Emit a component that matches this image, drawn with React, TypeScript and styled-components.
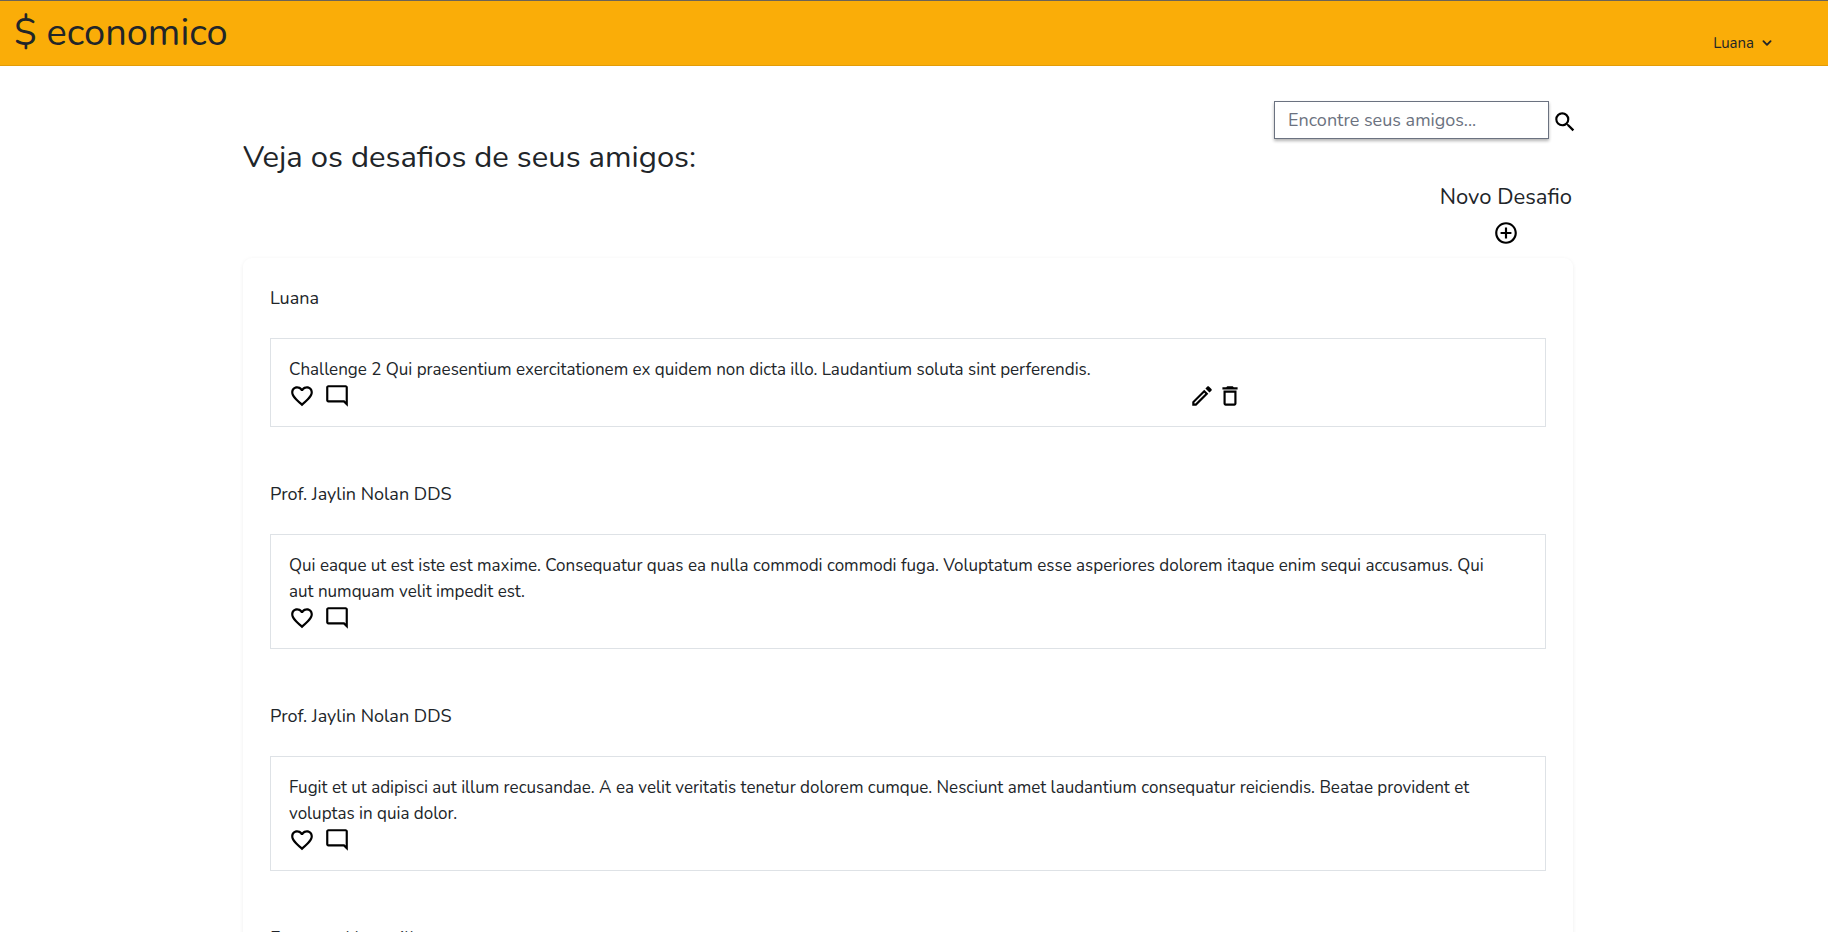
import React from "react";
import styled, { createGlobalStyle } from "styled-components";
import {
  MdSearch,
  MdAddCircleOutline,
  MdFavoriteBorder,
  MdOutlineModeComment,
  MdOutlineEdit,
  MdDeleteOutline,
} from "react-icons/md";

const GlobalStyle = createGlobalStyle`
  *, *::before, *::after { box-sizing: border-box; }
  html { overflow-x: hidden; scrollbar-width: none; }
  body {
    margin: 0;
    background: #fff;
    color: #212529;
    font-family: Nunito, Lato, sans-serif;
    font-size: 18px;
    line-height: 26px;
  }
  button, input { font: inherit; color: inherit; }
  h1, h2, h3, p { margin: 0; font-weight: 400; }
`;

const Header = styled.header`
  display: flex;
  justify-content: space-between;
  height: 66px;
  padding: 0 52px 0 14px;
  background: #faad08;
  border-top: 1px solid #6b6459;
  border-bottom: 1px solid #e39c07;
`;

const Brand = styled.a`
  padding-top: 9px;
  color: inherit;
  font-size: 38px;
  line-height: 46px;
  text-decoration: none;
`;

const UserMenu = styled.button`
  display: flex;
  align-items: center;
  align-self: flex-end;
  gap: 4px;
  margin-bottom: 9px;
  padding: 0;
  border: 0;
  background: none;
  font-size: 15px;
  line-height: 26px;
`;

const Page = styled.div`
  padding: 35px 12px 0 0;
`;

const Content = styled.main`
  width: 75%;
  max-width: 1330px;
  margin: 0 auto;
`;

const Search = styled.form`
  display: flex;
  justify-content: flex-end;
  align-items: center;
  gap: 3px;
  margin-right: -5px;
`;

const SearchInput = styled.input`
  width: 275px;
  height: 38px;
  padding: 0 13px;
  border: 1px solid #6b7280;
  border-radius: 0;
  background: #fff;
  box-shadow: 0 2px 3px rgba(0, 0, 0, 0.3);
  &::placeholder { color: #6b7280; opacity: 1; }
`;

const IconButton = styled.button`
  display: flex;
  padding: 0;
  border: 0;
  background: none;
  color: #000;
`;

const SearchButton = styled(IconButton)`
  padding-top: 3px;
`;

const Title = styled.h1`
  font-size: 31px;
  line-height: 36px;
`;

const NewChallenge = styled.section`
  display: flex;
  flex-direction: column;
  align-items: center;
  gap: 9px;
  width: max-content;
  margin: 8px 1px 12px auto;
`;

const Subtitle = styled.h2`
  font-size: 22px;
  line-height: 28px;
`;

const Feed = styled.div`
  padding: 27px 27px 54px;
  border-radius: 9px;
  box-shadow: 0 1px 4px rgba(0, 0, 0, 0.07);
`;

const Post = styled.article`
  margin-bottom: 54px;
`;

const Author = styled.h3`
  margin-bottom: 27px;
  font-size: 18px;
  line-height: 26px;
`;

const Card = styled.div`
  padding: 18px 18px 17px;
  border: 1px solid #dee2e6;
`;

const Text = styled.p`
  padding-right: 24px;
  font-size: 17px;
`;

const Actions = styled.div`
  display: grid;
  grid-template-columns: 8fr 3fr;
`;

const ActionGroup = styled.div<{ $gap: number }>`
  display: flex;
  gap: ${(p) => p.$gap}px;
`;

const ICON = 26;

const posts = [
  {
    author: "Luana",
    own: true,
    text: "Challenge 2 Qui praesentium exercitationem ex quidem non dicta illo. Laudantium soluta sint perferendis.",
  },
  {
    author: "Prof. Jaylin Nolan DDS",
    own: false,
    text: "Qui eaque ut est iste est maxime. Consequatur quas ea nulla commodi commodi fuga. Voluptatum esse asperiores dolorem itaque enim sequi accusamus. Qui aut numquam velit impedit est.",
  },
  {
    author: "Prof. Jaylin Nolan DDS",
    own: false,
    text: "Fugit et ut adipisci aut illum recusandae. A ea velit veritatis tenetur dolorem cumque. Nesciunt amet laudantium consequatur reiciendis. Beatae provident et voluptas in quia dolor.",
  },
];

export default function App() {
  return (
    <>
      <GlobalStyle />
      <Header>
        <Brand href="#">$ economico</Brand>
        <UserMenu type="button" aria-haspopup="menu">
          Luana
          <svg width="18" height="18" viewBox="0 0 20 20" fill="currentColor" aria-hidden="true">
            <path
              fillRule="evenodd"
              clipRule="evenodd"
              d="M5.293 7.293a1 1 0 011.414 0L10 10.586l3.293-3.293a1 1 0 111.414 1.414l-4 4a1 1 0 01-1.414 0l-4-4a1 1 0 010-1.414z"
            />
          </svg>
        </UserMenu>
      </Header>
      <Page>
        <Content>
          <Search>
            <SearchInput type="text" aria-label="Encontre seus amigos" placeholder="Encontre seus amigos..." />
            <SearchButton type="button" aria-label="Buscar">
              <MdSearch size={ICON} />
            </SearchButton>
          </Search>
          <Title>Veja os desafios de seus amigos:</Title>
          <NewChallenge>
            <Subtitle>Novo Desafio</Subtitle>
            <IconButton type="button" aria-label="Novo desafio">
              <MdAddCircleOutline size={ICON} />
            </IconButton>
          </NewChallenge>
          <Feed>
            {posts.map((post, i) => (
              <Post key={i}>
                <Author>{post.author}</Author>
                <Card>
                  <Text>{post.text}</Text>
                  <Actions>
                    <ActionGroup $gap={9}>
                      <IconButton type="button" aria-label="Curtir">
                        <MdFavoriteBorder size={ICON} />
                      </IconButton>
                      <IconButton type="button" aria-label="Comentar">
                        <MdOutlineModeComment size={ICON} />
                      </IconButton>
                    </ActionGroup>
                    {post.own && (
                      <ActionGroup $gap={2}>
                        <IconButton type="button" aria-label="Editar">
                          <MdOutlineEdit size={ICON} />
                        </IconButton>
                        <IconButton type="button" aria-label="Excluir">
                          <MdDeleteOutline size={ICON} />
                        </IconButton>
                      </ActionGroup>
                    )}
                  </Actions>
                </Card>
              </Post>
            ))}
            <Author>Emerson Hermaill</Author>
          </Feed>
        </Content>
      </Page>
    </>
  );
}
